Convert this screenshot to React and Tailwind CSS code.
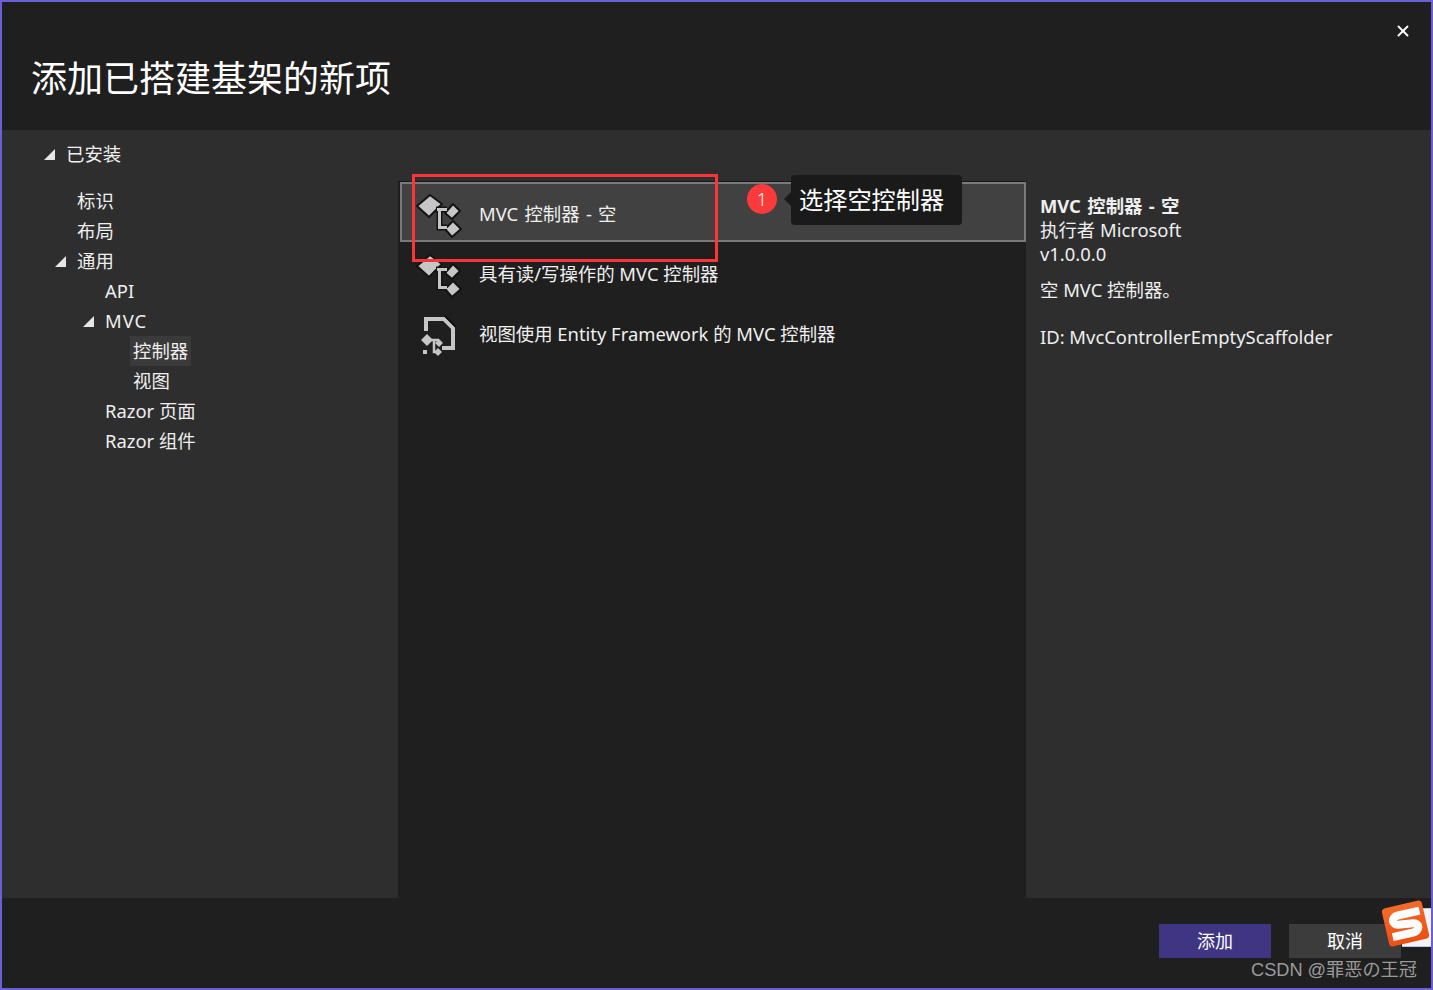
import { X } from "lucide-react";

const FONT = "font-['Noto_Sans','Noto_Sans_CJK_SC',sans-serif]";

const TREE = [
  { label: "标识", pad: "pl-[75px]" },
  { label: "布局", pad: "pl-[75px]" },
  { label: "通用", pad: "pl-[53px]", arrow: true },
  { label: "API", pad: "pl-[103px]" },
  { label: "MVC", pad: "pl-[81px]", arrow: true, text: "tracking-[1px]" },
  { label: "控制器", pad: "pl-[128px]", text: "flex h-full items-center bg-[#3a3a3a] px-[3px]" },
  { label: "视图", pad: "pl-[131px]" },
  { label: "Razor 页面", pad: "pl-[103px]" },
  { label: "Razor 组件", pad: "pl-[103px]" },
];

function Arrow() {
  return (
    <svg width="11" height="11" viewBox="0 0 11 11" className="shrink-0">
      <path d="M11 0V11H0Z" fill="#e6e6e6" />
    </svg>
  );
}

function ControllerIcon() {
  return (
    <svg width="48" height="48" viewBox="0 0 48 48" className="mt-[3px] shrink-0">
      <g stroke="#141414" strokeWidth="2" strokeLinejoin="round" fill="#c6c6c6">
        <path d="M16 5L28 14L15 27L3 16Z" />
        <path d="M39 14L46 21L38 29L31 23Z" />
        <path d="M39 31L47 39L38 47L31 39Z" />
      </g>
      <path d="M22 19.5H33M25.5 20V37.5H33" stroke="#141414" strokeWidth="6" fill="none" />
      <path d="M23 19.5H33M25.5 19.5V37.5H33" stroke="#c6c6c6" strokeWidth="3" fill="none" />
    </svg>
  );
}

function ViewIcon() {
  return (
    <svg width="48" height="48" viewBox="0 0 48 48" className="mt-[4px] shrink-0">
      <path d="M12 21V9H30L39 18V38H28" stroke="#c6c6c6" strokeWidth="4" fill="none" />
      <path d="M31 6L42 17" stroke="#0f0f0f" strokeWidth="2" fill="none" />
      <path d="M13 30H25M20 30V42H24" stroke="#c6c6c6" strokeWidth="2.5" fill="none" />
      <g fill="#c6c6c6">
        <path d="M13 24L19 30L13 36L7 30Z" />
        <path d="M25 29L29 33L25 37L21 33Z" />
        <path d="M24 38L28 42L24 46L20 42Z" />
        <rect x="9" y="40" width="4" height="4" />
      </g>
    </svg>
  );
}

function ListRow({ icon, label, selected }) {
  return (
    <div
      className={`flex h-[60px] items-center gap-[17px] text-[18.4px] ${
        selected ? "ml-[2px] border-2 border-[#7a7a7a] bg-[#414141] pl-[12px] [word-spacing:1.5px]" : "pl-[16px]"
      }`}
    >
      {icon}
      <span className="mt-[4px] whitespace-nowrap">{label}</span>
    </div>
  );
}

export default function App() {
  return (
    <div className={`relative flex h-[990px] w-[1433px] flex-col overflow-hidden border-2 border-[#6b5fd6] bg-[#1f1f1f] text-[#efefef] ${FONT}`}>
      {/* header */}
      <div className="flex h-[128px] shrink-0 items-start justify-between pl-[29px] pr-[19px] pt-[20px]">
        <h1 className="mt-[30px] text-[36px] leading-[54px] font-normal text-white">添加已搭建基架的新项</h1>
        <X size={18} strokeWidth={2.5} className="text-white" />
      </div>

      {/* body */}
      <div className="flex min-h-0 flex-1 bg-[#2e2e2e]">
        <div className="w-[396px] shrink-0 pt-[9px] text-[18.4px]">
          <div className="flex h-[30px] items-center gap-[11px] pl-[42px]">
            <Arrow />
            已安装
          </div>
          <div className="mt-[17px]">
            {TREE.map((t) => (
              <div key={t.label} className={`flex h-[30px] items-center gap-[11px] ${t.pad}`}>
                {t.arrow && <Arrow />}
                <span className={t.text}>{t.label}</span>
              </div>
            ))}
          </div>
        </div>

        <div className="mt-[51px] w-[628px] shrink-0 border-t border-[#1a1a1a] bg-[#1f1f1f]">
          <ListRow icon={<ControllerIcon />} label="MVC 控制器 - 空" selected />
          <ListRow icon={<ControllerIcon />} label="具有读/写操作的 MVC 控制器" />
          <ListRow icon={<ViewIcon />} label="视图使用 Entity Framework 的 MVC 控制器" />
        </div>

        <div className="flex-1 pl-[14px] pt-[64px] text-[18.4px] leading-[24px]">
          <div className="font-bold [word-spacing:1.6px]">MVC 控制器 - 空</div>
          <div>执行者 Microsoft</div>
          <div>v1.0.0.0</div>
          <div className="mt-[12px]">空 MVC 控制器。</div>
          <div className="mt-[23px]">ID: MvcControllerEmptyScaffolder</div>
        </div>
      </div>

      {/* footer */}
      <div className="flex h-[90px] shrink-0 justify-end gap-[18px] pr-[30px] pt-[26px] text-[18px]">
        <button className="h-[34px] w-[112px] bg-[#3f3583] text-white">添加</button>
        <button className="h-[34px] w-[112px] bg-[#3c3c3c] text-white">取消</button>
      </div>

      {/* annotations pasted over the dialog */}
      <div className="absolute left-[410px] top-[172px] h-[88px] w-[306px] border-[3px] border-[#fb3437]" />
      <div className="absolute left-[745px] top-[182px] flex h-[30px] w-[30px] items-center justify-center rounded-full bg-[#fb3a3c] text-[18px] font-light text-white">1</div>
      <div className="absolute left-[789px] top-[173px] flex h-[50px] w-[171px] items-center rounded bg-[#1a1a1a] pl-[8px] text-[24.2px] text-white">
        <span className="absolute left-[-7px] top-[17px] h-0 w-0 border-y-[7px] border-r-[7px] border-y-transparent border-r-[#1a1a1a]" />
        <span className="mt-[1px]">选择空控制器</span>
      </div>
      <div className="absolute bottom-[6px] right-[14px] font-['Liberation_Sans','Noto_Sans_CJK_SC',sans-serif] text-[18.2px] leading-[24px] text-[#9a9a9a]">CSDN @罪恶の王冠</div>
      <div className="absolute left-[1400px] top-[906px] h-[39px] w-[40px] border-y border-[#b9c4e6] bg-[#f2f4fb]" />
      <div className="absolute left-[1383px] top-[902px] flex h-[39px] w-[41px] rotate-[-13deg] items-center justify-center rounded-[4px] bg-gradient-to-b from-[#f56a28] to-[#ee4f12]">
        <svg width="36" height="30" viewBox="0 0 36 30">
          <path d="M34 5H12C4 5 4 13 10 14L25 16C32 17 30 25 23 25H2" stroke="#ffffff" strokeWidth="8" fill="none" />
        </svg>
      </div>
    </div>
  );
}
